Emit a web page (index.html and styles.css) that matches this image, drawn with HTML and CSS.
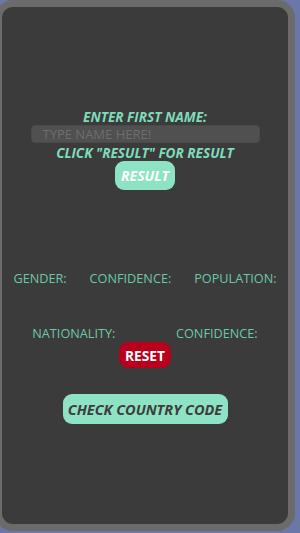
FILE: index.html
```html
<!DOCTYPE html>
<html>
<head>
<meta charset="utf-8">
<link rel="stylesheet" href="styles.css">
</head>
<body>
<div class="frame">
  <div class="title">ENTER FIRST NAME:</div>
  <input class="name-input" type="text" placeholder="TYPE NAME HERE!">
  <div class="title hint">CLICK "RESULT" FOR RESULT</div>
  <button class="btn btn-result">RESULT</button>
  <div class="row row-first">
    <span class="label">GENDER:</span>
    <span class="label">CONFIDENCE:</span>
    <span class="label">POPULATION:</span>
  </div>
  <div class="row row-second">
    <span class="label">NATIONALITY:</span>
    <span class="label">CONFIDENCE:</span>
  </div>
  <button class="btn btn-reset">RESET</button>
  <button class="btn btn-country">CHECK COUNTRY CODE</button>
</div>
</body>
</html>
```
FILE: styles.css
```css
html, body {
  margin: 0;
  padding: 0;
  height: 533px;
  overflow: hidden;
  background: #6b77a8;
}
.frame {
  box-sizing: border-box;
  margin-left: -5px;
  width: 300px;
  height: 531px;
  border: 7px solid #6b6b6b;
  border-radius: 18px;
  background: #3b3b3b;
  display: flex;
  flex-direction: column;
  align-items: center;
  padding-top: 103px;
  font-family: "Open Sans", sans-serif;
}
.title {
  font-size: 13.6px;
  line-height: 14px;
  font-weight: 700;
  font-style: italic;
  color: #7fdcbb;
}
.name-input {
  box-sizing: border-box;
  margin: 1px 0 0 0;
  width: 229px;
  height: 18px;
  border: 1px solid #4a4a4a;
  border-radius: 4px;
  background: #505050;
  padding: 0 0 0 11px;
  font-family: "Open Sans", sans-serif;
  font-size: 13px;
  color: #cccccc;
  outline: none;
}
.name-input::placeholder {
  color: #6e6e6e;
}
.hint {
  margin-top: 3px;
}
.btn {
  border: none;
  border-radius: 9px;
  font-family: "Open Sans", sans-serif;
  font-weight: 700;
  padding: 0;
  cursor: pointer;
}
.btn-result {
  margin-top: 1px;
  width: 60px;
  height: 29px;
  background: #8de3c4;
  color: #ffffff;
  font-style: italic;
  font-size: 14px;
}
.row {
  align-self: stretch;
  display: flex;
  justify-content: space-around;
}
.row-first {
  margin-top: 81px;
}
.row-second {
  margin-top: 41px;
}
.label {
  font-size: 12.7px;
  line-height: 14px;
  color: #6cc7a6;
}
.btn-reset {
  margin-top: 2px;
  width: 52px;
  height: 26px;
  background: #b8001c;
  color: #ffffff;
  font-size: 13.7px;
}
.btn-country {
  margin-top: 26px;
  width: 165px;
  height: 30px;
  background: #8de3c4;
  color: #3d3d3d;
  font-style: italic;
  font-size: 14.5px;
}
```
